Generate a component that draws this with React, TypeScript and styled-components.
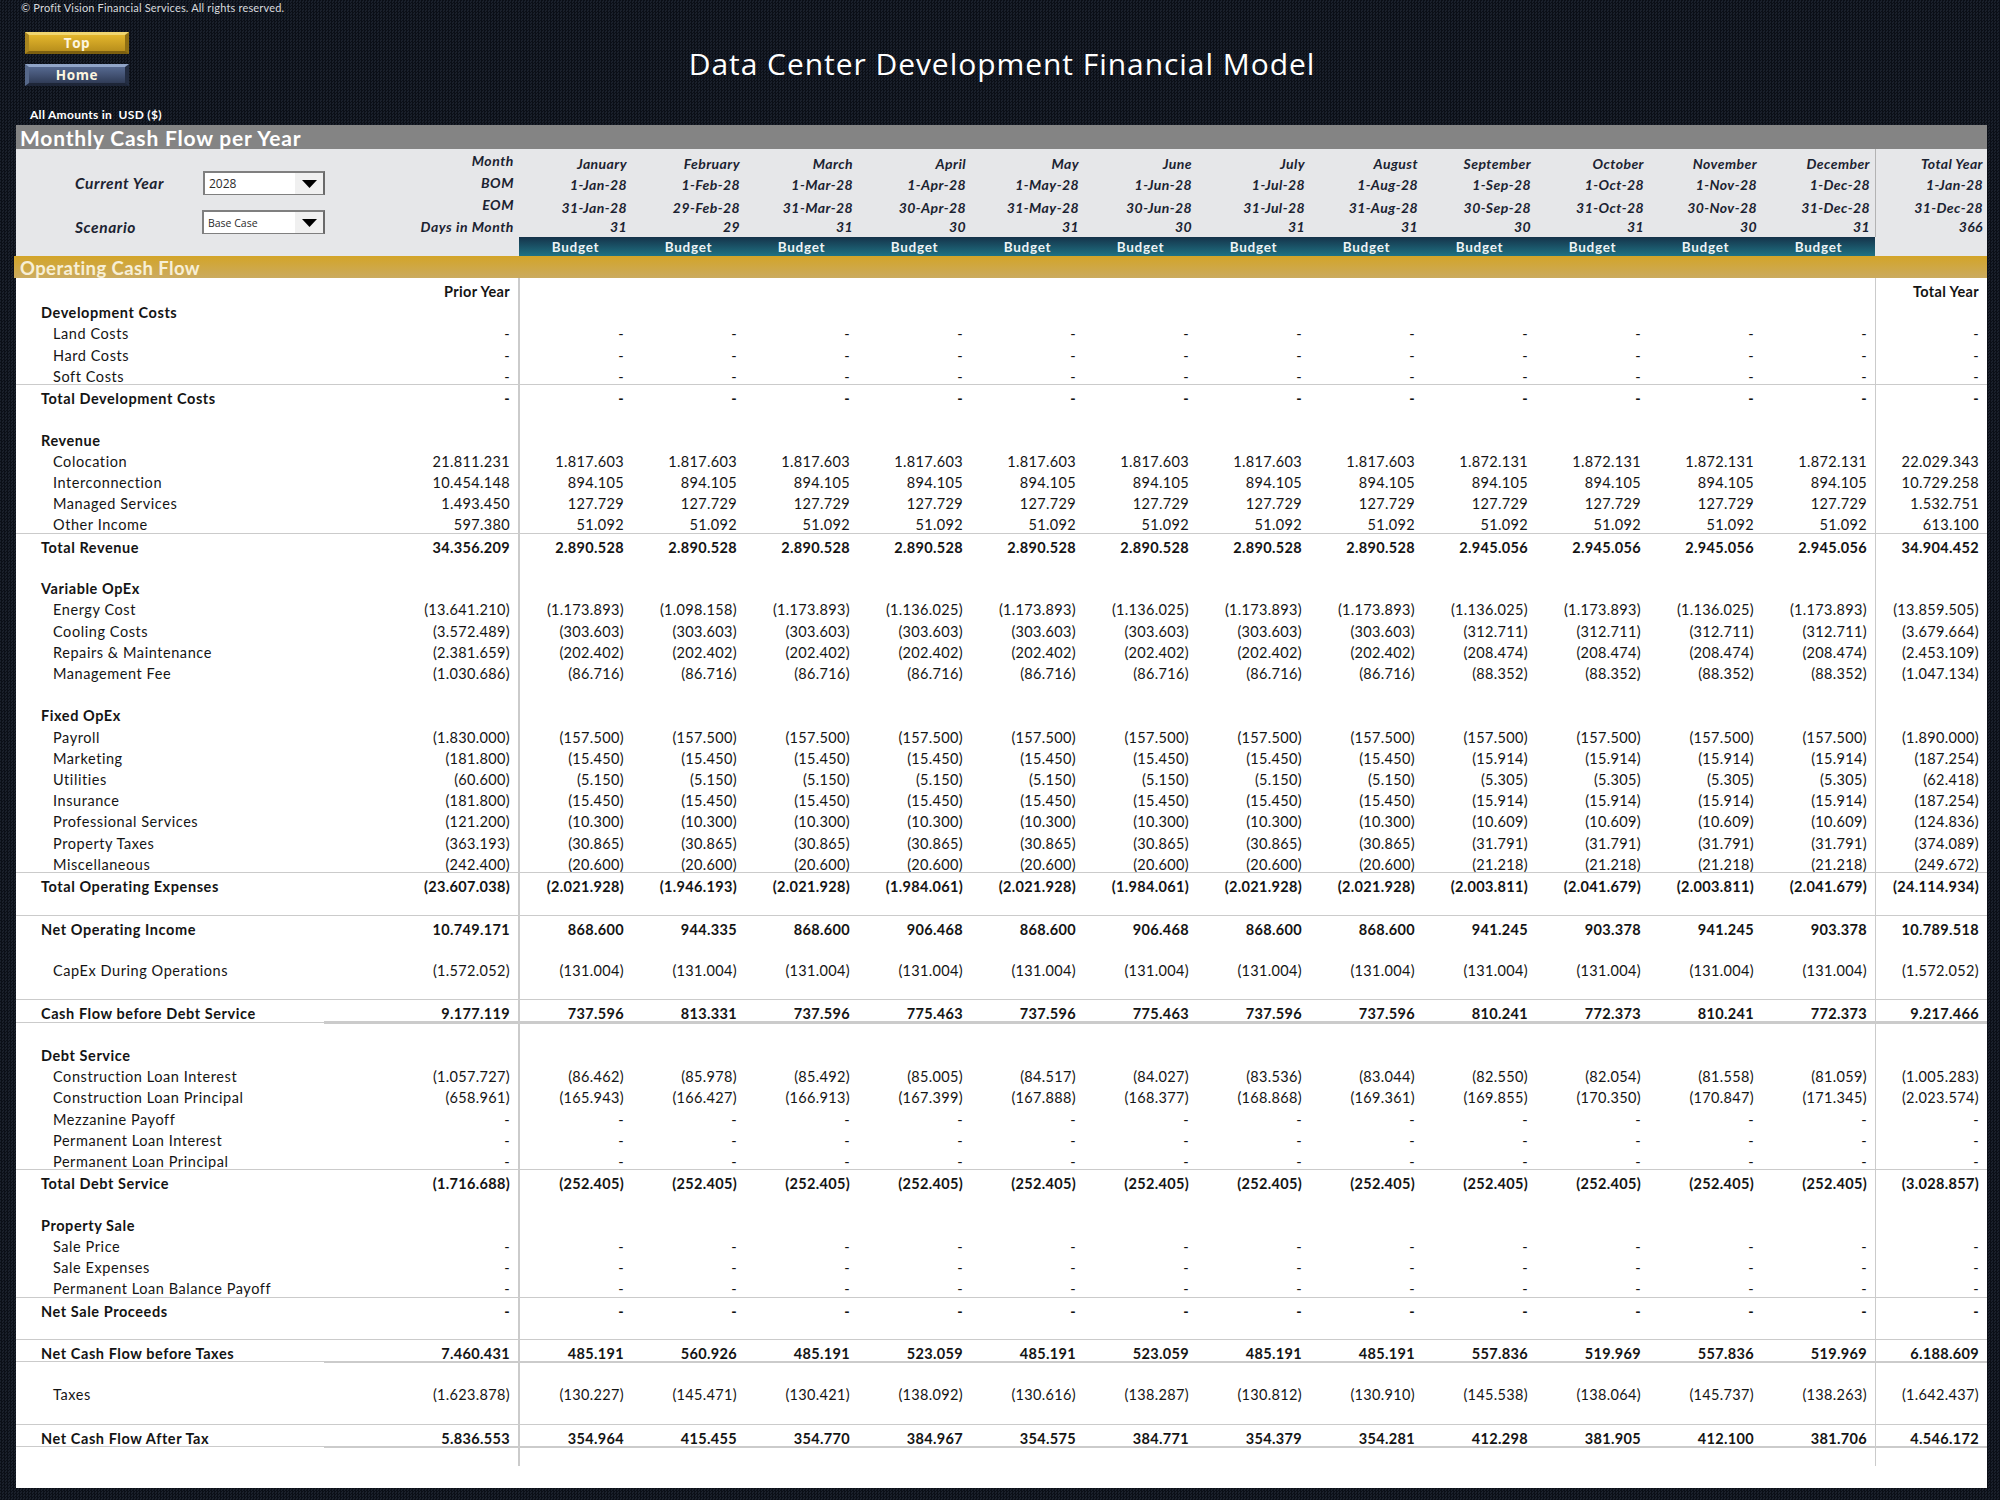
import React from 'react';
import styled, { createGlobalStyle } from 'styled-components';

const Global = createGlobalStyle`
  html, body { margin: 0; padding: 0; }
  #root { width: 2000px; height: 1500px; overflow: hidden; }
`;

const FONT = `Lato, "Open Sans", "Liberation Sans", sans-serif`;
const COLUMNS = '503px repeat(12, 113px) 1fr';
const LINE = '#cbcbcb';

const Page = styled.div`
  width: 2000px;
  height: 1500px;
  font-family: ${FONT};
  background: repeating-conic-gradient(#0b0f17 0 25%, #1a202b 0 50%) 0 0 / 3px 3px;
`;
const Masthead = styled.header`
  height: 125px;
  display: flex;
  flex-direction: column;
  color: #fff;
`;
const Copyright = styled.div`
  height: 16px;
  line-height: 16px;
  padding-left: 21px;
  font-size: 11px;
  letter-spacing: 0.17px;
  color: #d8dadd;
`;
const NavRow = styled.div`
  margin-top: 16px;
  padding-left: 25px;
  padding-right: 21px;
  display: grid;
  grid-template-columns: 1fr auto 1fr;
`;
const ButtonStack = styled.nav`
  display: flex;
  flex-direction: column;
  gap: 10px;
`;
const BevelButton = styled.div<{ $tone: 'gold' | 'slate' }>`
  box-sizing: border-box;
  width: 104px;
  height: 22px;
  border-style: solid;
  border-width: 3px 4px;
  border-color: ${p =>
    p.$tone === 'gold'
      ? '#f0d670 #8f6f14 #7d6010 #a9851f'
      : '#91a5c8 #232d42 #1e2638 #56688a'};
  background: ${p =>
    p.$tone === 'gold'
      ? 'linear-gradient(#e3b62c, #b98f1c)'
      : 'linear-gradient(#566990, #303c57)'};
  color: #fdf6e0;
  font-size: 13.5px;
  font-weight: 700;
  letter-spacing: 0.6px;
  line-height: 17px;
  text-align: center;
  font-family: "Open Sans", sans-serif;
`;
const Title = styled.h1`
  margin: 0;
  padding-top: 13px;
  font-family: "Open Sans", sans-serif;
  font-size: 30px;
  font-weight: 400;
  letter-spacing: 0.95px;
  line-height: 38px;
  color: #fff;
  white-space: nowrap;
`;
const Amounts = styled.div`
  margin-top: auto;
  height: 20px;
  line-height: 20px;
  padding-left: 30px;
  font-size: 12px;
  font-weight: 700;
  letter-spacing: 0.3px;
  white-space: pre;
`;
const Sheet = styled.main`
  margin-left: 16px;
  width: 1971px;
  height: 1363px;
  background: #fff;
`;
const GreyBand = styled.h2`
  margin: 0;
  box-sizing: border-box;
  height: 24px;
  padding-left: 4px;
  line-height: 26px;
  font-size: 21px;
  font-weight: 700;
  letter-spacing: 0.8px;
  color: #fff;
  background: #848484;
`;
const HeaderGrid = styled.section`
  display: grid;
  grid-template-columns: 330px 173px repeat(12, 113px) 1fr;
  grid-template-rows: repeat(4, 22px) 19px;
  background: #e6e7e9;
  color: #1b2331;
  font-size: 14px;
  font-weight: 700;
  font-style: italic;
  letter-spacing: 0.42px;
`;
const Controls = styled.div`
  grid-column: 1;
  grid-row: 1 / span 5;
  padding: 22px 0 0 59px;
  display: flex;
  flex-direction: column;
  gap: 15px;
`;
const ControlRow = styled.div`
  display: flex;
  align-items: flex-start;
`;
const ControlLabel = styled.div<{ $width: number; $mid: number }>`
  width: ${p => p.$width}px;
  line-height: ${p => p.$mid * 2}px;
  height: 24px;
  font-size: 15.5px;
  letter-spacing: 0.6px;
`;
const Select = styled.div`
  box-sizing: border-box;
  flex: none;
  height: 24px;
  display: flex;
  background: #fff;
  border: 2px solid #7f7f7f;
  border-right-color: #6a6a6a;
  border-bottom-width: 1px;
`;
const SelectValue = styled.div<{ $size: number; $width: number }>`
  width: ${p => p.$width}px;
  padding-left: 4px;
  font-family: "Open Sans", sans-serif;
  font-size: ${p => p.$size}px;
  font-style: normal;
  font-weight: 400;
  letter-spacing: 0;
  line-height: 22px;
  color: #2c2c2c;
`;
const SelectArrow = styled.div`
  width: 28px;
  display: flex;
  align-items: center;
  justify-content: center;
  background: #f0f0f0;
`;
const MetaLabel = styled.div`
  padding-right: 5px;
  text-align: right;
  line-height: 24px;
  letter-spacing: 0.55px;
  white-space: nowrap;
`;
const MetaValue = styled.div<{ $mid: number }>`
  padding-right: 5px;
  text-align: right;
  line-height: ${p => p.$mid * 2}px;
  white-space: nowrap;
`;
const MetaTotal = styled(MetaValue)`
  padding-right: 4px;
  border-left: 1.5px solid #b3b3b3;
`;
const BudgetCell = styled.div`
  text-align: center;
  line-height: 21px;
  font-size: 13.5px;
  font-style: normal;
  letter-spacing: 0.7px;
  color: #eef3f5;
  background: linear-gradient(#15334a, #1f7283);
`;
const GoldBand = styled.h2`
  box-sizing: border-box;
  margin: 0 0 0 -2px;
  height: 22px;
  width: 1973px;
  padding-left: 6px;
  line-height: 24px;
  font-size: 18.5px;
  font-weight: 700;
  letter-spacing: 0.4px;
  color: #f7efd6;
  background: linear-gradient(#d3a428, #cbab5f);
`;
const Rows = styled.section`
  color: #141414;
  font-size: 14.5px;
  letter-spacing: 0.33px;
`;
const Row = styled.div<{ $top?: boolean; $under?: boolean; $strong?: boolean }>`
  position: relative;
  box-sizing: border-box;
  height: 21.22px;
  display: grid;
  grid-template-columns: ${COLUMNS};
  line-height: 27.4px;
  font-weight: ${p => (p.$strong ? 700 : 400)};
  border-top: ${p => (p.$top ? `1px solid ${LINE}` : '0')};
  ${p =>
    p.$under
      ? `&::before {
    content: '';
    position: absolute;
    left: 0;
    right: 0;
    bottom: -2px;
    height: 1px;
    background: ${LINE};
  }
  &::after {
    content: '';
    position: absolute;
    left: 308px;
    right: 0;
    bottom: -3px;
    height: 2.5px;
    background: ${LINE};
  }`
      : ''}
`;
const LabelCell = styled.div<{ $level: number }>`
  display: flex;
  justify-content: space-between;
  padding-left: ${p => (p.$level ? 37 : 25)}px;
  padding-right: 9px;
  white-space: nowrap;
`;
const LabelText = styled.span`
  letter-spacing: 0.57px;
`;
const NumberCell = styled.div<{ $rule?: 'first' | 'total' }>`
  padding-right: 8px;
  text-align: right;
  white-space: nowrap;
  ${p => (p.$rule === 'first' ? `border-left: 2px solid ${LINE}; margin-left: -1px;` : '')}
  ${p => (p.$rule === 'total' ? `border-left: 1px solid ${LINE};` : '')}
`;

type RowData = {
  label?: string;
  values?: string[];
  level?: number;
  strong?: boolean;
  top?: boolean;
  under?: boolean;
};

const rep = (v: string, n: number) => Array<string>(n).fill(v);
const dashes = rep('-', 14);
const steps = (first: string, a: string, b: string, last: string) => [first, ...rep(a, 8), ...rep(b, 4), last];
const flat = (first: string, a: string, last: string) => [first, ...rep(a, 12), last];
const item = (label: string, values: string[] = dashes): RowData => ({ label, values, level: 1 });
const head = (label: string): RowData => ({ label, strong: true });
const total = (label: string, values: string[] = dashes, extra: Partial<RowData> = {}): RowData => ({
  label,
  values,
  strong: true,
  top: true,
  ...extra,
});
const blank: RowData = {};

const data: RowData[] = [
  { values: ['Prior Year', ...rep('', 12), 'Total Year'], strong: true },
  head('Development Costs'),
  item('Land Costs'),
  item('Hard Costs'),
  item('Soft Costs'),
  total('Total Development Costs'),
  blank,
  head('Revenue'),
  item('Colocation', steps('21.811.231', '1.817.603', '1.872.131', '22.029.343')),
  item('Interconnection', flat('10.454.148', '894.105', '10.729.258')),
  item('Managed Services', flat('1.493.450', '127.729', '1.532.751')),
  item('Other Income', flat('597.380', '51.092', '613.100')),
  total('Total Revenue', steps('34.356.209', '2.890.528', '2.945.056', '34.904.452')),
  blank,
  head('Variable OpEx'),
  item('Energy Cost', ['(13.641.210)', '(1.173.893)', '(1.098.158)', '(1.173.893)', '(1.136.025)', '(1.173.893)', '(1.136.025)', '(1.173.893)', '(1.173.893)', '(1.136.025)', '(1.173.893)', '(1.136.025)', '(1.173.893)', '(13.859.505)']),
  item('Cooling Costs', steps('(3.572.489)', '(303.603)', '(312.711)', '(3.679.664)')),
  item('Repairs & Maintenance', steps('(2.381.659)', '(202.402)', '(208.474)', '(2.453.109)')),
  item('Management Fee', steps('(1.030.686)', '(86.716)', '(88.352)', '(1.047.134)')),
  blank,
  head('Fixed OpEx'),
  item('Payroll', flat('(1.830.000)', '(157.500)', '(1.890.000)')),
  item('Marketing', steps('(181.800)', '(15.450)', '(15.914)', '(187.254)')),
  item('Utilities', steps('(60.600)', '(5.150)', '(5.305)', '(62.418)')),
  item('Insurance', steps('(181.800)', '(15.450)', '(15.914)', '(187.254)')),
  item('Professional Services', steps('(121.200)', '(10.300)', '(10.609)', '(124.836)')),
  item('Property Taxes', steps('(363.193)', '(30.865)', '(31.791)', '(374.089)')),
  item('Miscellaneous', steps('(242.400)', '(20.600)', '(21.218)', '(249.672)')),
  total('Total Operating Expenses', ['(23.607.038)', '(2.021.928)', '(1.946.193)', '(2.021.928)', '(1.984.061)', '(2.021.928)', '(1.984.061)', '(2.021.928)', '(2.021.928)', '(2.003.811)', '(2.041.679)', '(2.003.811)', '(2.041.679)', '(24.114.934)']),
  blank,
  total('Net Operating Income', ['10.749.171', '868.600', '944.335', '868.600', '906.468', '868.600', '906.468', '868.600', '868.600', '941.245', '903.378', '941.245', '903.378', '10.789.518']),
  blank,
  item('CapEx During Operations', flat('(1.572.052)', '(131.004)', '(1.572.052)')),
  blank,
  total('Cash Flow before Debt Service', ['9.177.119', '737.596', '813.331', '737.596', '775.463', '737.596', '775.463', '737.596', '737.596', '810.241', '772.373', '810.241', '772.373', '9.217.466'], { under: true }),
  blank,
  head('Debt Service'),
  item('Construction Loan Interest', ['(1.057.727)', '(86.462)', '(85.978)', '(85.492)', '(85.005)', '(84.517)', '(84.027)', '(83.536)', '(83.044)', '(82.550)', '(82.054)', '(81.558)', '(81.059)', '(1.005.283)']),
  item('Construction Loan Principal', ['(658.961)', '(165.943)', '(166.427)', '(166.913)', '(167.399)', '(167.888)', '(168.377)', '(168.868)', '(169.361)', '(169.855)', '(170.350)', '(170.847)', '(171.345)', '(2.023.574)']),
  item('Mezzanine Payoff'),
  item('Permanent Loan Interest'),
  item('Permanent Loan Principal'),
  total('Total Debt Service', flat('(1.716.688)', '(252.405)', '(3.028.857)')),
  blank,
  head('Property Sale'),
  item('Sale Price'),
  item('Sale Expenses'),
  item('Permanent Loan Balance Payoff'),
  total('Net Sale Proceeds'),
  blank,
  total('Net Cash Flow before Taxes', ['7.460.431', '485.191', '560.926', '485.191', '523.059', '485.191', '523.059', '485.191', '485.191', '557.836', '519.969', '557.836', '519.969', '6.188.609'], { under: true }),
  blank,
  item('Taxes', ['(1.623.878)', '(130.227)', '(145.471)', '(130.421)', '(138.092)', '(130.616)', '(138.287)', '(130.812)', '(130.910)', '(145.538)', '(138.064)', '(145.737)', '(138.263)', '(1.642.437)']),
  blank,
  total('Net Cash Flow After Tax', ['5.836.553', '354.964', '415.455', '354.770', '384.967', '354.575', '384.771', '354.379', '354.281', '412.298', '381.905', '412.100', '381.706', '4.546.172'], { under: true }),
  blank,
];

const months = ['January', 'February', 'March', 'April', 'May', 'June', 'July', 'August', 'September', 'October', 'November', 'December'];
const bom = ['1-Jan-28', '1-Feb-28', '1-Mar-28', '1-Apr-28', '1-May-28', '1-Jun-28', '1-Jul-28', '1-Aug-28', '1-Sep-28', '1-Oct-28', '1-Nov-28', '1-Dec-28'];
const eom = ['31-Jan-28', '29-Feb-28', '31-Mar-28', '30-Apr-28', '31-May-28', '30-Jun-28', '31-Jul-28', '31-Aug-28', '30-Sep-28', '31-Oct-28', '30-Nov-28', '31-Dec-28'];
const days = ['31', '29', '31', '30', '31', '30', '31', '31', '30', '31', '30', '31'];
const meta = [
  { label: 'Month', values: months, total: 'Total Year', mid: 15 },
  { label: 'BOM', values: bom, total: '1-Jan-28', mid: 14 },
  { label: 'EOM', values: eom, total: '31-Dec-28', mid: 15 },
  { label: 'Days in Month', values: days, total: '366', mid: 12 },
];

const Arrow = () => (
  <svg width="15" height="8" viewBox="0 0 15 8">
    <path d="M0 0h15L7.5 8z" fill="#000" />
  </svg>
);

const Dropdown = ({ value, size, width }: { value: string; size: number; width: number }) => (
  <Select>
    <SelectValue $size={size} $width={width}>{value}</SelectValue>
    <SelectArrow>
      <Arrow />
    </SelectArrow>
  </Select>
);

export default function App() {
  return (
    <Page>
      <Global />
      <Masthead>
        <Copyright>© Profit Vision Financial Services. All rights reserved.</Copyright>
        <NavRow>
          <ButtonStack>
            <BevelButton $tone="gold">Top</BevelButton>
            <BevelButton $tone="slate">Home</BevelButton>
          </ButtonStack>
          <Title>Data Center Development Financial Model</Title>
        </NavRow>
        <Amounts>All Amounts in  USD ($)</Amounts>
      </Masthead>
      <Sheet>
        <GreyBand>Monthly Cash Flow per Year</GreyBand>
        <HeaderGrid>
          <Controls>
            <ControlRow>
              <ControlLabel $width={128} $mid={12}>Current Year</ControlLabel>
              <Dropdown value="2028" size={12} width={86} />
            </ControlRow>
            <ControlRow>
              <ControlLabel $width={127} $mid={17}>Scenario</ControlLabel>
              <Dropdown value="Base Case" size={10.5} width={87} />
            </ControlRow>
          </Controls>
          {meta.map(m => (
            <React.Fragment key={m.label}>
              <MetaLabel>{m.label}</MetaLabel>
              {m.values.map((v, i) => (
                <MetaValue key={i} $mid={m.mid}>{v}</MetaValue>
              ))}
              <MetaTotal $mid={m.mid}>{m.total}</MetaTotal>
            </React.Fragment>
          ))}
          <div />
          {months.map(m => (
            <BudgetCell key={m}>Budget</BudgetCell>
          ))}
          <div />
        </HeaderGrid>
        <GoldBand>Operating Cash Flow</GoldBand>
        <Rows>
          {data.map((r, i) => {
            const vals = r.values ?? rep('', 14);
            return (
              <Row key={i} $top={r.top} $under={r.under} $strong={r.strong}>
                <LabelCell $level={r.level ?? 0}>
                  <LabelText>{r.label}</LabelText>
                  <span>{vals[0]}</span>
                </LabelCell>
                {vals.slice(1).map((v, j) => (
                  <NumberCell key={j} $rule={j === 0 ? 'first' : j === 12 ? 'total' : undefined}>
                    {v}
                  </NumberCell>
                ))}
              </Row>
            );
          })}
        </Rows>
      </Sheet>
    </Page>
  );
}
